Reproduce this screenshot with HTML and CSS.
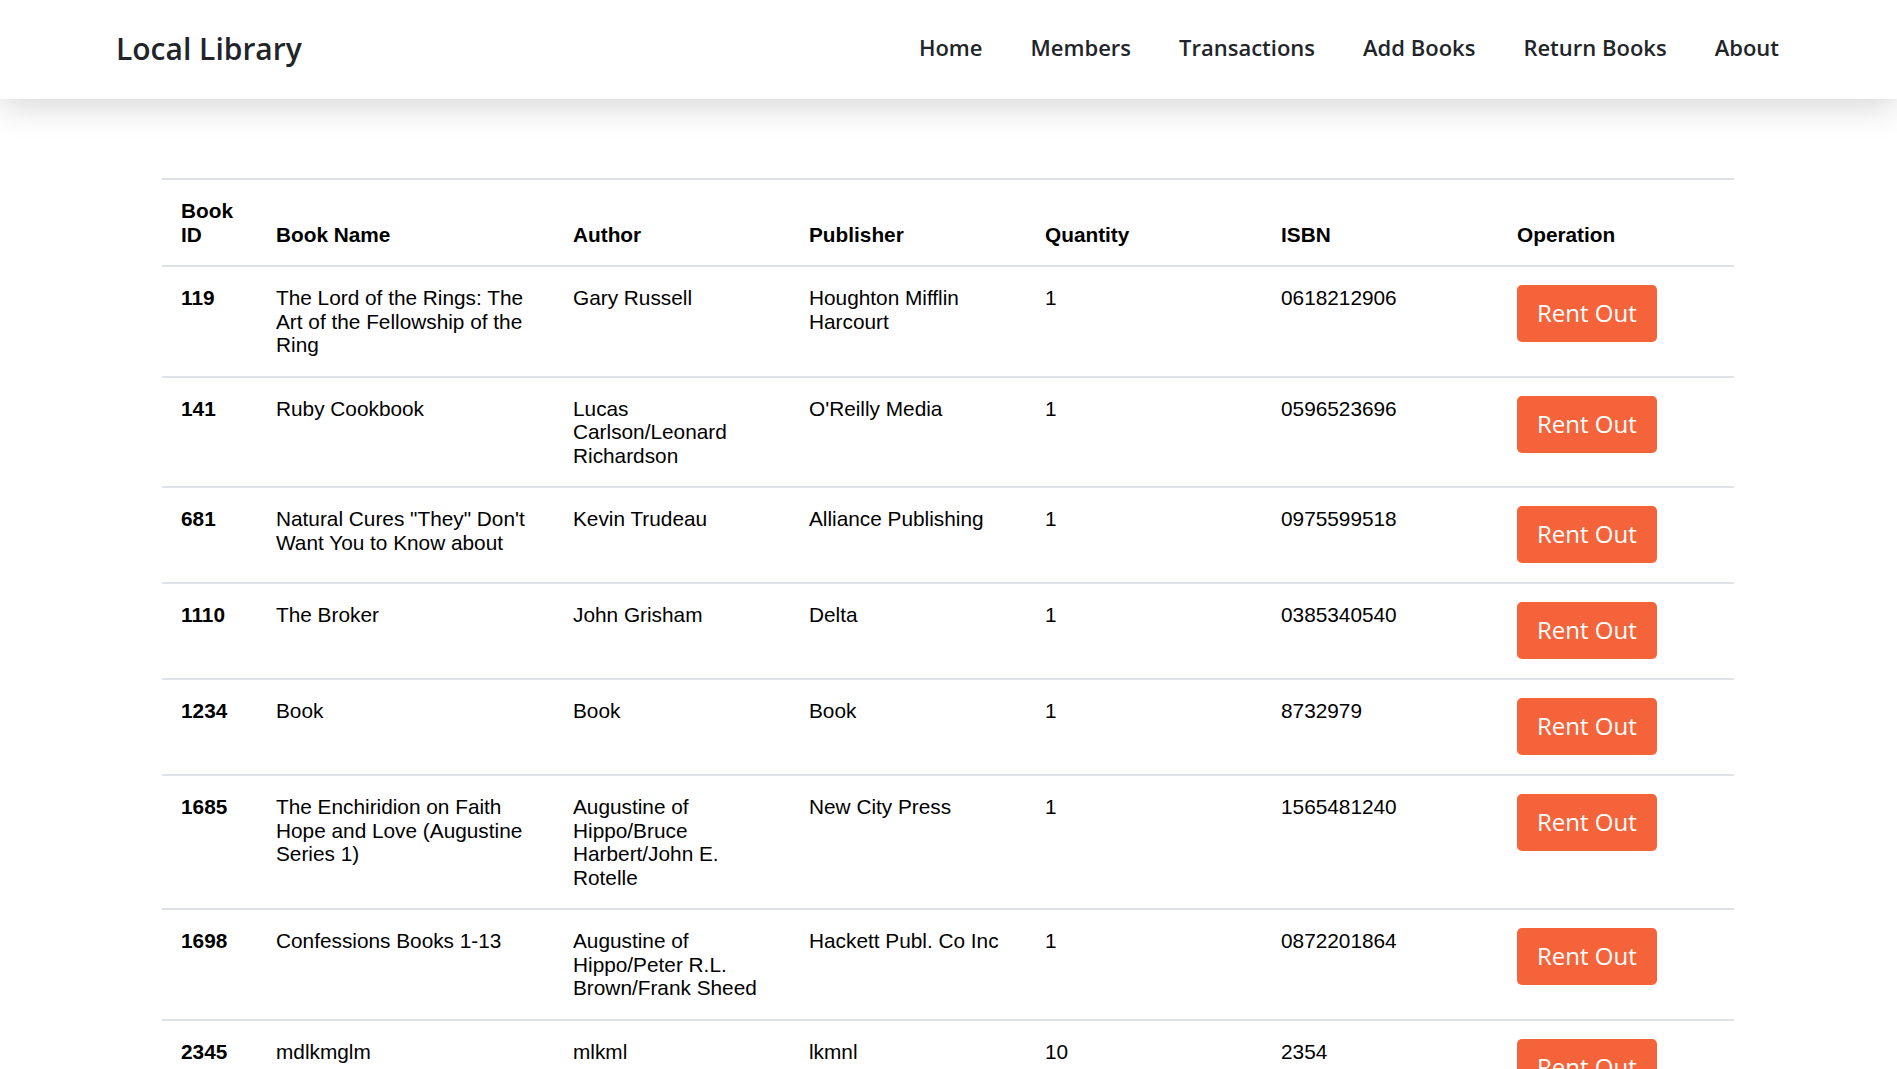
FILE: index.html
```html
<!DOCTYPE html>
<html lang="en">
<head>
<meta charset="utf-8">
<title>Local Library</title>
<link rel="stylesheet" href="styles.css">
</head>
<body>
<header class="navbar">
  <a class="brand" href="#">Local Library</a>
  <nav class="nav-links">
    <a href="#">Home</a>
    <a href="#">Members</a>
    <a href="#">Transactions</a>
    <a href="#">Add Books</a>
    <a href="#">Return Books</a>
    <a href="#">About</a>
  </nav>
</header>
<main class="content">
  <table class="books">
    <colgroup>
      <col class="c-id"><col class="c-name"><col class="c-std"><col class="c-std"><col class="c-std"><col class="c-std"><col class="c-std">
    </colgroup>
    <thead>
      <tr><th>Book ID</th><th>Book Name</th><th>Author</th><th>Publisher</th><th>Quantity</th><th>ISBN</th><th>Operation</th></tr>
    </thead>
    <tbody>
      <tr><th>119</th><td>The Lord of the Rings: The Art of the Fellowship of the Ring</td><td>Gary Russell</td><td>Houghton Mifflin Harcourt</td><td>1</td><td>0618212906</td><td><button class="rent">Rent Out</button></td></tr>
      <tr><th>141</th><td>Ruby Cookbook</td><td>Lucas Carlson/Leonard Richardson</td><td>O'Reilly Media</td><td>1</td><td>0596523696</td><td><button class="rent">Rent Out</button></td></tr>
      <tr><th>681</th><td>Natural Cures "They" Don't Want You to Know about</td><td>Kevin Trudeau</td><td>Alliance Publishing</td><td>1</td><td>0975599518</td><td><button class="rent">Rent Out</button></td></tr>
      <tr><th>1110</th><td>The Broker</td><td>John Grisham</td><td>Delta</td><td>1</td><td>0385340540</td><td><button class="rent">Rent Out</button></td></tr>
      <tr><th>1234</th><td>Book</td><td>Book</td><td>Book</td><td>1</td><td>8732979</td><td><button class="rent">Rent Out</button></td></tr>
      <tr><th>1685</th><td>The Enchiridion on Faith Hope and Love (Augustine Series 1)</td><td>Augustine of Hippo/Bruce Harbert/John E. Rotelle</td><td>New City Press</td><td>1</td><td>1565481240</td><td><button class="rent">Rent Out</button></td></tr>
      <tr><th>1698</th><td>Confessions Books 1-13</td><td>Augustine of Hippo/Peter R.L. Brown/Frank Sheed</td><td>Hackett Publ. Co Inc</td><td>1</td><td>0872201864</td><td><button class="rent">Rent Out</button></td></tr>
      <tr><th>2345</th><td>mdlkmglm</td><td>mlkml</td><td>lkmnl</td><td>10</td><td>2354</td><td><button class="rent">Rent Out</button></td></tr>
    </tbody>
  </table>
</main>
</body>
</html>
```
FILE: styles.css
```css
html, body {
  margin: 0;
  padding: 0;
  background: #ffffff;
}

body {
  font-family: "Liberation Sans", Arial, sans-serif;
  color: #000;
}

.navbar {
  display: flex;
  align-items: center;
  justify-content: space-between;
  height: 99px;
  padding: 0 118px 0 116px;
  box-sizing: border-box;
  background: #fff;
  box-shadow: 0 8px 32px rgba(0, 0, 0, 0.16);
  position: relative;
  z-index: 1;
}

.brand {
  font-family: "Open Sans", sans-serif;
  font-weight: 600;
  font-size: 30px;
  color: #212529;
  text-decoration: none;
  margin-top: -3px;
}

.nav-links {
  display: flex;
  gap: 48px;
  margin-top: -5px;
}

.nav-links a {
  font-family: "Open Sans", sans-serif;
  font-weight: 600;
  font-size: 22px;
  color: #212529;
  text-decoration: none;
}

.content {
  padding: 79px 163px 0 162px;
}

.books {
  width: 100%;
  table-layout: fixed;
  border-collapse: collapse;
  font-size: 20.8px;
  line-height: 23.5px;
  border-top: 2px solid #dee2e6;
}

.c-id { width: 95px; }
.c-name { width: 297px; }

.books th,
.books td {
  padding: 19px 19px;
  text-align: left;
  vertical-align: top;
  border-bottom: 2px solid #dee2e6;
}

.books thead th {
  vertical-align: bottom;
  font-weight: bold;
}

.books tbody th {
  font-weight: bold;
}

.rent {
  font-family: "Open Sans", sans-serif;
  font-size: 24px;
  font-weight: 500;
  line-height: 33px;
  color: #fff;
  background: #f5633b;
  border: none;
  border-radius: 5px;
  padding: 11px 20px 13px;
  margin-top: -1px;
  cursor: pointer;
}
```
